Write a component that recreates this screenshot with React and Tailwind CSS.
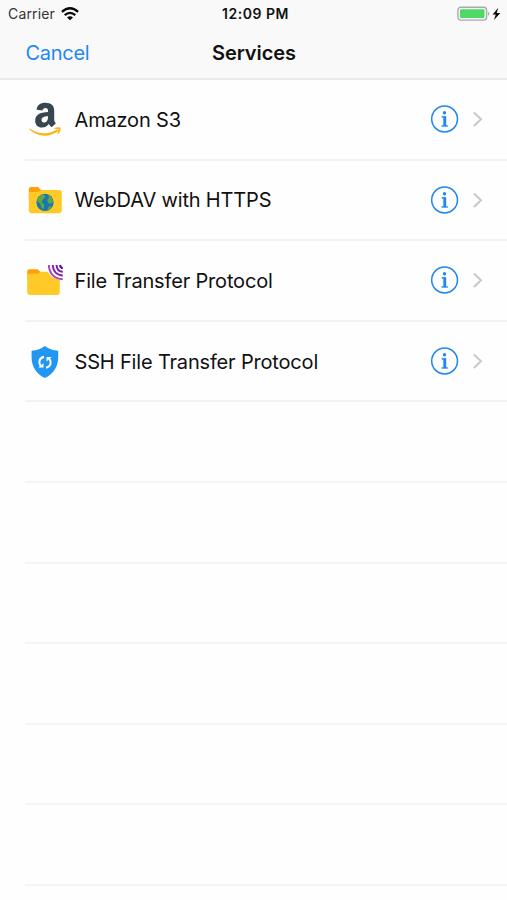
import React from "react";

function Amazon() {
  return (
    <svg className="h-[50px] w-[50px]" viewBox="0 0 50 50" fill="none">
      <path
        d="M16.6 15.8C17 11 20.3 8.8 25.2 8.8C31.4 8.8 34.2 11.6 34.2 16.8V24.8C34.2 27.1 34.7 28 35.8 29.4L31.6 33.2C30.4 32.3 29.6 31.4 28.8 30.1C27 32.5 24.9 33.6 22 33.6C17.8 33.6 15.2 30.9 15.2 26.8C15.2 20.6 19.9 18.4 28 18V17.1C28 15 27.4 14.1 25.5 14.1C23.7 14.1 22.8 15 22.5 16.6ZM28 22.2C23.8 22.3 21.6 23.3 21.6 26C21.6 27.5 22.4 28.5 23.8 28.5C26.4 28.5 28.3 26.3 28 22.2Z"
        fill="#37474f"
        fillRule="evenodd"
      />
      <path d="M9.8 34.4C18.4 40.6 28.8 40.8 37.3 35.6L38.4 37C29.5 43.6 17.3 43.4 9.2 35.3Z" fill="#fdb515" />
      <path d="M33.6 34.4C36.2 32.9 38.2 32.9 40.5 33.5C40.9 36.1 39.9 38.5 38.1 40L37.4 39.4L38.5 35.5Z" fill="#fdb515" />
    </svg>
  );
}

function WebFolder() {
  return (
    <svg className="h-[50px] w-[50px]" viewBox="0 0 50 50" fill="none">
      <path d="M8.8 24V14.5Q8.8 12 11.3 12H18L21.5 15.4H39V24Z" fill="#ffa000" />
      <path d="M8.8 18Q8.8 17 10.5 17H18.2L21.3 15.1H39.5Q41.8 15.1 41.8 17.5V35.8Q41.8 38.2 39.4 38.2H11.2Q8.8 38.2 8.8 35.8Z" fill="#ffca28" />
      <circle cx="25" cy="27.4" r="8.6" fill="#1976b2" />
      <path d="M17 26C17.4 22.5 20 19.8 23.6 19.2L25.6 21.8L23 24.5L21.4 27.5L24.4 29.2L23.3 34.7L21.2 32L20.6 29Z" fill="#62a943" />
      <path d="M28 20.3L32 22.8L33 26.5L31 29L28 27.8L27.2 25L29 23.4ZM28.8 31.5L31.5 30.8L30 34L27.4 35Z" fill="#62a943" />
    </svg>
  );
}

function FtpFolder() {
  return (
    <svg className="h-[50px] w-[50px]" viewBox="0 0 50 50" fill="none">
      <path d="M7.2 24V16.7Q7.2 14.3 9.6 14.3H17.5L21 17.5H35V24Z" fill="#ffa000" />
      <path d="M7.2 20Q7.2 18.8 9 18.8H17.5L20.8 16.8H37.3Q39.8 16.8 39.8 19.2V37.6Q39.8 40 37.3 40H9.7Q7.2 40 7.2 37.6Z" fill="#ffca28" />
      <path d="M27.7 9H43V25H39.7Q30 22.5 27.7 16.5Z" fill="#fff" />
      <g strokeWidth="2">
        <path d="M28.9 10C28.9 18.2 34.5 24.2 42.8 24.2" stroke="#ab47bc" />
        <path d="M32.8 10C33 16.4 37 20.4 42.8 20.4" stroke="#8e24aa" />
        <path d="M36.5 10C36.8 14.4 39.3 16.7 42.8 16.8" stroke="#7b1fa2" />
        <path d="M40 10C40.3 12.1 41.2 13 42.8 13.1" stroke="#4a148c" />
      </g>
    </svg>
  );
}

function Shield() {
  return (
    <svg className="h-[50px] w-[50px]" viewBox="0 0 50 50" fill="none">
      <path d="M24.9 9.9C28 12.5 33 14.5 38.2 14.8V21C38.2 31.2 33.2 38.1 24.9 42.1C16.6 38.1 11.6 31.2 11.6 21V14.8C16.8 14.5 21.8 12.5 24.9 9.9Z" fill="#2196f3" />
      <path d="M24 20.9C19.4 21.7 18 26.3 20.6 29.8M26 31.7C30.6 30.9 32 26.3 29.4 22.8" stroke="#fff" strokeWidth="2.1" />
      <path d="M18.2 31.6H23.5V27.2ZM31.8 21H26.5V25.4Z" fill="#fff" />
    </svg>
  );
}

function Accessories() {
  return (
    <svg className="ml-auto mr-[20px] h-[30px] w-[58px] shrink-0" viewBox="0 0 58 30" fill="none">
      <circle cx="15.6" cy="15" r="12.9" stroke="#1e88f2" strokeWidth="1.5" />
      <circle cx="15.5" cy="8.8" r="1.7" fill="#1e88f2" />
      <path d="M12.9 12.3H17V21.4H18.7V22.4H12.7V21.4H14.5V13.4H12.9Z" fill="#1e88f2" stroke="#1e88f2" strokeWidth=".4" />
      <path d="M44.9 8.5L52 15.2L44.9 21.9" stroke="#c7c7cc" strokeWidth="2" />
    </svg>
  );
}

const services = [
  { name: "Amazon S3", Icon: Amazon },
  { name: "WebDAV with HTTPS", Icon: WebFolder },
  { name: "File Transfer Protocol", Icon: FtpFolder },
  { name: "SSH File Transfer Protocol", Icon: Shield },
];

export default function App() {
  return (
    <div className="flex h-[900px] w-[507px] flex-col overflow-hidden bg-[#fefefe] font-['Inter',sans-serif] text-[#111]">
      <header className="h-[80px] shrink-0 border-b-2 border-[#ebebeb] bg-[#f9f9f9]">
        <div className="grid h-[27px] grid-cols-[1fr_auto_1fr] items-center">
          <div className="flex items-center pl-[8px]">
            <span className="text-[14px] tracking-[0.15px] text-[#333]">Carrier</span>
            <svg className="ml-[6px] h-[14px] w-[18px]" viewBox="0 0 18 14" fill="none" stroke="#080808" strokeWidth="2.3">
              <path d="M.9 4.8Q9-2.2 17.1 4.8M3.7 8.1Q9 3.6 14.3 8.1" />
              <path d="M6 10.4Q9 8 12 10.4L9 13.2Z" fill="#080808" stroke="none" />
            </svg>
          </div>
          <span className="pl-[4px] text-[14px] font-semibold tracking-[0.5px]">12:09 PM</span>
          <svg className="mr-[4px] h-[16px] w-[46px] justify-self-end" viewBox="0 0 46 16" fill="none">
            <rect x=".9" y="1.3" width="28.7" height="12.8" rx="2.8" stroke="#aaa" strokeWidth="1.4" />
            <rect x="3" y="3.3" width="24.5" height="8.8" rx="1" fill="#4cd964" />
            <path d="M31 5.7Q33.8 7.7 31 9.9Z" fill="#aaa" />
            <path d="M41.3 1.8L35.6 8.5H38.7L37 14L43.3 7H39.7Z" fill="#080808" />
          </svg>
        </div>
        <div className="grid h-[51px] grid-cols-[1fr_auto_1fr] items-center">
          <button className="justify-self-start pl-[25.5px] text-[20px] tracking-[-0.3px] text-[#1e88f2]">Cancel</button>
          <h1 className="pl-[1px] text-[20px] font-semibold tracking-[-0.05px]">Services</h1>
        </div>
      </header>
      <ul className="flex flex-col pl-[25px]">
        {services.map(({ name, Icon }) => (
          <li key={name} className="flex h-[80.6px] shrink-0 items-center border-b-2 border-[#f2f2f2]">
            <span className="ml-[-5px] shrink-0">
              <Icon />
            </span>
            <span className="ml-[4.5px] whitespace-nowrap pt-[1px] text-[20px] tracking-[-0.17px]">{name}</span>
            <Accessories />
          </li>
        ))}
        {[0, 1, 2, 3, 4, 5].map((n) => (
          <li key={n} className="h-[80.6px] shrink-0 border-b-2 border-[#f4f4f4]" />
        ))}
      </ul>
    </div>
  );
}
